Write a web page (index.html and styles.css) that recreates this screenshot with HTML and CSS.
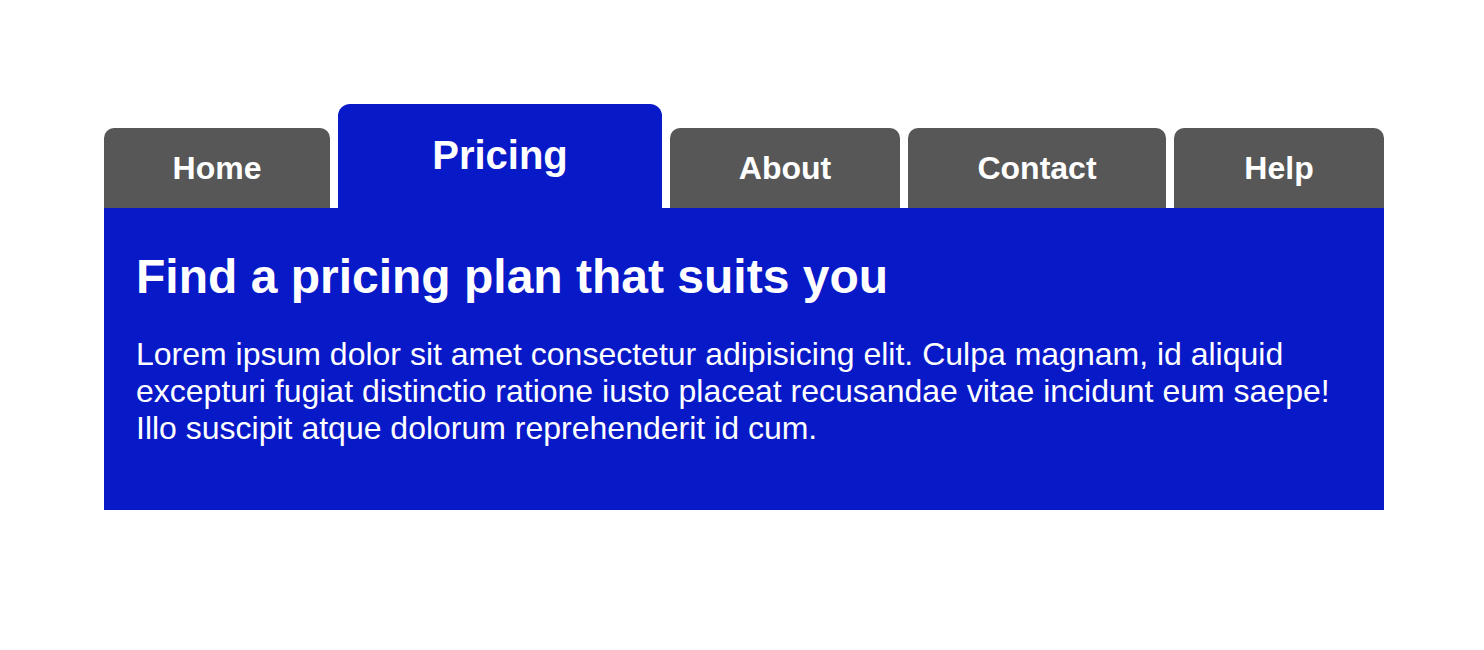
FILE: index.html
```html
<!DOCTYPE html>
<html lang="en">
<head>
<meta charset="utf-8">
<title>Tabs</title>
<link rel="stylesheet" href="styles.css">
</head>
<body>
<div class="tabs">
  <nav class="tab-bar">
    <a class="tab">Home</a>
    <a class="tab tab-active">Pricing</a>
    <a class="tab">About</a>
    <a class="tab">Contact</a>
    <a class="tab">Help</a>
  </nav>
  <section class="panel">
    <h1 class="panel-title">Find a pricing plan that suits you</h1>
    <p class="panel-text">Lorem ipsum dolor sit amet consectetur adipisicing elit. Culpa magnam, id aliquid excepturi fugiat distinctio ratione iusto placeat recusandae vitae incidunt eum saepe! Illo suscipit atque dolorum reprehenderit id cum.</p>
  </section>
</div>
</body>
</html>
```
FILE: styles.css
```css
* { box-sizing: border-box; }
body {
  margin: 0;
  background: #fff;
  font-family: "Liberation Sans", Arial, sans-serif;
  color: #fff;
}
.tabs {
  margin: 104px 100px 0 104px;
  width: 1280px;
}
.tab-bar {
  display: grid;
  grid-template-columns: 226px 324px 230px 258px 1fr;
  align-items: end;
  gap: 8px;
}
.tab {
  height: 80px;
  display: flex;
  align-items: center;
  justify-content: center;
  background: #575757;
  border-radius: 10px 10px 0 0;
  font-size: 32px;
  font-weight: bold;
  color: #fff;
}
.tab-active {
  height: 104px;
  background: #0819c8;
  font-size: 40px;
  border-radius: 12px 12px 0 0;
  padding-bottom: 1px;
}
.panel {
  background: #0819c8;
  padding: 41px 32px 32px;
}
.panel-title {
  margin: 0;
  font-size: 48px;
  font-weight: bold;
}
.panel-text {
  margin: 32px 0 31px;
  font-size: 32px;
}
```
